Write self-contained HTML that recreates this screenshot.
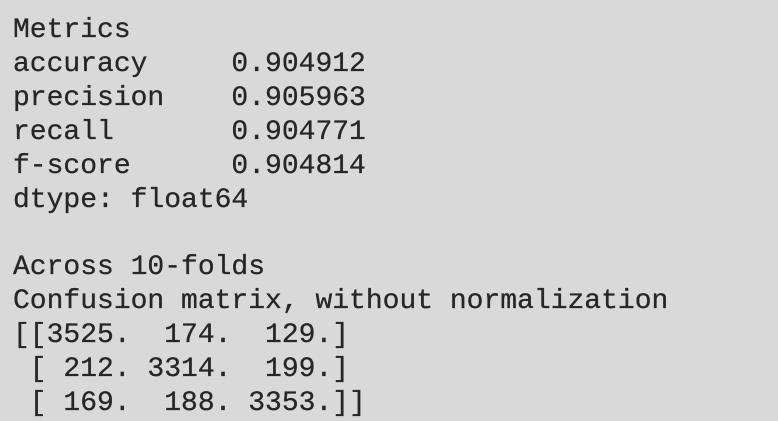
<!DOCTYPE html>
<html><head><style>
html,body{margin:0;padding:0;background:#d9d9d9;width:778px;height:417px;overflow:hidden}
pre{margin:0;position:absolute;left:13px;top:14px;font-family:"Liberation Mono",monospace;font-size:28px;line-height:33.9px;color:#262626;-webkit-text-stroke:0.3px #262626}
</style></head><body>
<pre>Metrics
accuracy     0.904912
precision    0.905963
recall       0.904771
f-score      0.904814
dtype: float64

Across 10-folds
Confusion matrix, without normalization
[[3525.  174.  129.]
 [ 212. 3314.  199.]
 [ 169.  188. 3353.]]</pre>
</body></html>
